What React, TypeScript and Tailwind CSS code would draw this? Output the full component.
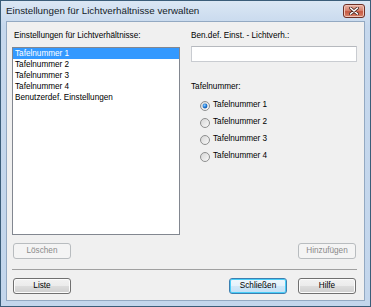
import React from "react";

const font = "font-['Liberation_Sans',Arial,sans-serif]";

const Radio = ({ checked }: { checked?: boolean }) => (
  <svg width="10" height="10" viewBox="0 0 10 10" className="shrink-0">
    <defs>
      <linearGradient id="rfill" x1="0" y1="0" x2="1" y2="1">
        <stop offset="0" stopColor="#d4d4d4" />
        <stop offset="1" stopColor="#fbfbfb" />
      </linearGradient>
      <radialGradient id="rdot" cx="0.4" cy="0.35" r="0.7">
        <stop offset="0" stopColor="#8fd0ff" />
        <stop offset="0.6" stopColor="#1a74d2" />
        <stop offset="1" stopColor="#0d4f9e" />
      </radialGradient>
    </defs>
    <circle cx="5" cy="5" r="4.5" fill="url(#rfill)" stroke="#8e8f8f" strokeWidth="1" />
    {checked && <circle cx="5" cy="5" r="2.4" fill="url(#rdot)" />}
  </svg>
);

type BtnKind = "normal" | "disabled" | "default";

const Button = ({ label, kind = "normal" }: { label: string; kind?: BtnKind }) => {
  const styles: Record<BtnKind, string> = {
    normal:
      "border-[#707070] text-black bg-[linear-gradient(to_bottom,#f2f2f2_0%,#ebebeb_50%,#dddddd_50%,#cfcfcf_100%)] shadow-[inset_0_0_0_1px_#fcfcfc]",
    disabled: "border-[#b8bcbf] text-[#8a8a8a] bg-[#f4f4f4]",
    default:
      "border-[#3c7fb1] text-black bg-[linear-gradient(to_bottom,#eef7fd_0%,#e3f1fb_50%,#cfe7f8_50%,#c4e0f5_100%)] shadow-[inset_0_0_0_1px_#48cef8]",
  };
  return (
    <div
      className={`flex h-[16px] w-[58px] items-center justify-center rounded-[3px] border text-[8.2px] ${styles[kind]}`}
    >
      {label}
    </div>
  );
};

export default function App() {
  const items = ["Tafelnummer 1", "Tafelnummer 2", "Tafelnummer 3", "Tafelnummer 4", "Benutzerdef. Einstellungen"];
  const radios = ["Tafelnummer 1", "Tafelnummer 2", "Tafelnummer 3", "Tafelnummer 4"];

  return (
    <div
      className={`flex h-[307px] w-[371px] flex-col border border-[#3b5d79] bg-[linear-gradient(to_bottom,#dbe7f4,#c6d8ed_25px,#c3d6ec)] ${font}`}
    >
      {/* title bar */}
      <div className="flex h-[20px] shrink-0 items-start justify-between pl-[5px] pr-[5px]">
        <span className="mt-[4px] text-[9.8px] leading-[12px] text-[#141c28]">
          Einstellungen für Lichtverhältnisse verwalten
        </span>
        <div className="mt-[3px] flex h-[14px] w-[22px] items-center justify-center rounded-[3px] border border-[#6e3026] bg-[linear-gradient(to_bottom,#eab3a4_0%,#d88470_45%,#c75a43_55%,#d7836a_100%)] shadow-[inset_0_0_0_1px_#f0c4b8]">
          <svg width="10" height="8" viewBox="0 0 10 8">
            <path d="M1.5 1 L8.5 7 M8.5 1 L1.5 7" stroke="#4a2620" strokeWidth="3" strokeLinecap="round" />
            <path d="M1.5 1 L8.5 7 M8.5 1 L1.5 7" stroke="#ffffff" strokeWidth="1.6" strokeLinecap="round" />
          </svg>
        </div>
      </div>

      {/* client area */}
      <div className="mx-[5px] mb-[5px] flex flex-1 flex-col border border-[#93a9c2] bg-[#f0f0f0] text-[8.2px] text-black">
        <div className="flex gap-[11px] pl-[5px] pr-[7px] pt-[8px]">
          {/* left column */}
          <div className="flex w-[168px] flex-col">
            <div className="ml-[2px] h-[12px] leading-[12px]">Einstellungen für Lichtverhältnisse:</div>
            <div className="mt-[5px] h-[188px] border border-[#828790] bg-white">
              {items.map((item, i) => (
                <div
                  key={item}
                  className={`h-[11px] pl-[2px] leading-[11px] ${i === 0 ? "bg-[#3399ff] text-white" : ""}`}
                >
                  {item}
                </div>
              ))}
            </div>
          </div>

          {/* right column */}
          <div className="flex w-[166px] flex-col">
            <div className="h-[12px] leading-[12px]">Ben.def. Einst. - Lichtverh.:</div>
            <div className="mt-[4px] h-[16px] border border-[#c9ccd1] border-t-[#b6b9be] bg-white" />
            <div className="mt-[19px] h-[12px] leading-[12px]">Tafelnummer:</div>
            <div className="mt-[4px] flex flex-col">
              {radios.map((r, i) => (
                <div key={r} className="flex h-[17px] items-center gap-[3px] pl-[9px]">
                  <Radio checked={i === 0} />
                  <span>{r}</span>
                </div>
              ))}
            </div>
          </div>
        </div>

        <div className="mt-[8px] flex justify-between pl-[6px] pr-[8px]">
          <Button label="Löschen" kind="disabled" />
          <Button label="Hinzufügen" kind="disabled" />
        </div>

        <div className="ml-[5px] mr-[7px] mt-[10px] h-px bg-[#a0a0a0]" />

        <div className="mt-[8px] flex items-center pl-[6px] pr-[8px]">
          <Button label="Liste" />
          <div className="ml-auto flex gap-[11px]">
            <Button label="Schließen" kind="default" />
            <Button label="Hilfe" />
          </div>
        </div>
      </div>
    </div>
  );
}
